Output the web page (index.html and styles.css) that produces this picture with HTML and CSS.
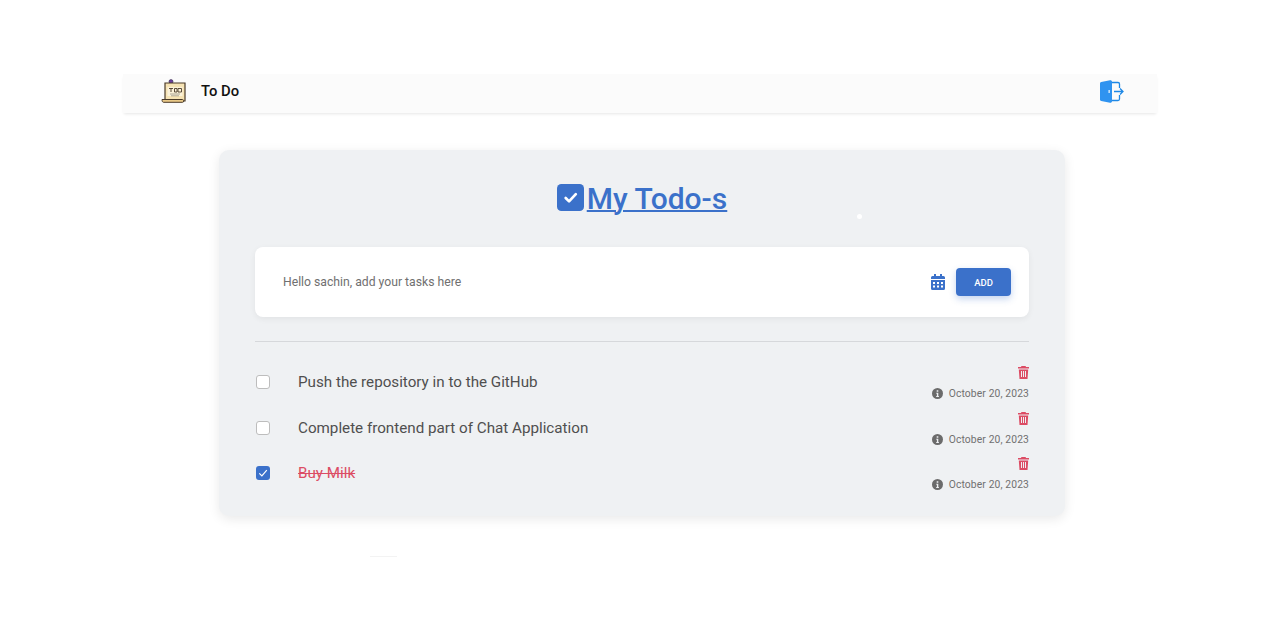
FILE: index.html
```html
<!DOCTYPE html>
<html lang="en">
<head>
<meta charset="utf-8">
<title>To Do</title>
<link rel="stylesheet" href="styles.css">
</head>
<body>
<div class="app">
  <nav class="navbar">
    <a class="brand">
      <svg class="brand-logo" viewBox="0 0 26 24" width="26" height="24">
        <circle cx="10" cy="2.600" r="2" fill="#6b3fa0" stroke="#2b2340" stroke-width=".6"/>
        <path d="M4 4h20v18H4z" fill="#f6e3b4" stroke="#4a3a28" stroke-width="1.200"/>
        <path d="M1 20.500h20.500c.8 0 1.200.7 1.200 1.500s-.4 1.300-1.200 1.300H2.500C1.500 23.300 1 22 1 20.500z" fill="#e9c987" stroke="#4a3a28" stroke-width="1"/>
        <rect x="6.500" y="8" width="15" height="9" fill="#fbf2d9"/>
        <path d="M8 9.500h4M10 9.500v3.500M13.500 9.500h2.500v3.500h-2.500zM17 9.500h3.500v3.500H17z" stroke="#4a3a28" stroke-width=".9" fill="none"/>
        <path d="M9 15h10M10 16.800h8" stroke="#9b9384" stroke-width=".8"/>
      </svg>
      <span class="brand-name">To Do</span>
    </a>
    <svg class="logout" viewBox="0 0 24 23" width="24" height="23">
      <path d="M11 2.500h7a1.500 1.500 0 0 1 1.500 1.500v4M19.500 15v4a1.500 1.500 0 0 1-1.500 1.500h-7" fill="none" stroke="#1e88e5" stroke-width="1.300"/>
      <path d="M0 3.500C0 2.700.5 2.200 1.200 2L10 .2c1-.2 2 .5 2 1.500v19.600c0 1-1 1.700-2 1.500l-8.800-1.800C.5 20.800 0 20.300 0 19.500z" fill="#2f93f0"/>
      <path d="M8.500 10h1.300v3H8.500z" fill="#e3f2fd"/>
      <path d="M14 11.500h9M20 8.500l3 3-3 3" fill="none" stroke="#1e88e5" stroke-width="1.300"/>
    </svg>
  </nav>

  <main class="card">
    <span class="speck"></span>
    <span class="smudge"></span>
    <h1 class="title">
      <svg class="title-icon" viewBox="0 0 28 28" width="27" height="27">
        <rect width="28" height="28" rx="4.500" fill="#3b71ca"/>
        <path d="M9 14.500 12.500 18 19.500 10.500" fill="none" stroke="#fff" stroke-width="2.800" stroke-linecap="round" stroke-linejoin="round"/>
      </svg><a class="title-link">My Todo-s</a>
    </h1>

    <form class="add-box">
      <span class="add-text">Hello sachin, add your tasks here</span>
      <svg class="calendar" viewBox="0 0 14 16" width="14" height="16">
        <path fill="#3b71ca" fill-rule="evenodd" d="M3 0h2v2h4V0h2v2h1.500A1.500 1.500 0 0 1 14 3.500V5H0V3.500A1.500 1.500 0 0 1 1.500 2H3zM0 6h14v8.500a1.500 1.500 0 0 1-1.500 1.500h-11A1.500 1.500 0 0 1 0 14.500zm2 2v2h2V8zm4 0v2h2V8zm4 0v2h2V8zm-8 3.500v2h2v-2zm4 0v2h2v-2zm4 0v2h2v-2z"/>
      </svg>
      <button class="add-btn" type="button">ADD</button>
    </form>

    <hr class="rule">

    <ul class="tasks">
      <li class="task">
        <span class="check"></span>
        <span class="task-text">Push the repository in to the GitHub</span>
        <div class="meta">
          <svg class="trash" viewBox="0 0 11 13" width="11" height="13"><path fill="#dc4c64" fill-rule="evenodd" d="M3.500 0h4l.6 1H11v1.500H0V1h2.900zM.8 3.500h9.400L9.500 13h-8zM3 5v6h1V5zm2 0v6h1V5zm2 0v6h1V5z"/></svg>
          <div class="date"><svg class="info" viewBox="0 0 11 11" width="11" height="11"><circle cx="5.500" cy="5.500" r="5.500" fill="#6b6b6b"/><path d="M4.700 2.200h1.600v1.500H4.700zM4.300 4.700h2v3.300h.6v1H4.200V8h.7V5.700h-.6z" fill="#eff1f3"/></svg><span>October 20, 2023</span></div>
        </div>
      </li>
      <li class="task">
        <span class="check"></span>
        <span class="task-text">Complete frontend part of Chat Application</span>
        <div class="meta">
          <svg class="trash" viewBox="0 0 11 13" width="11" height="13"><path fill="#dc4c64" fill-rule="evenodd" d="M3.500 0h4l.6 1H11v1.500H0V1h2.900zM.8 3.500h9.400L9.500 13h-8zM3 5v6h1V5zm2 0v6h1V5zm2 0v6h1V5z"/></svg>
          <div class="date"><svg class="info" viewBox="0 0 11 11" width="11" height="11"><circle cx="5.500" cy="5.500" r="5.500" fill="#6b6b6b"/><path d="M4.700 2.200h1.600v1.500H4.700zM4.300 4.700h2v3.300h.6v1H4.200V8h.7V5.700h-.6z" fill="#eff1f3"/></svg><span>October 20, 2023</span></div>
        </div>
      </li>
      <li class="task">
        <span class="check checked">
          <svg viewBox="0 0 14 14" width="14" height="14"><path d="M3.300 7.300 5.900 9.900 10.800 4.200" fill="none" stroke="#fff" stroke-width="1.200"/></svg>
        </span>
        <span class="task-text done">Buy Milk</span>
        <div class="meta">
          <svg class="trash" viewBox="0 0 11 13" width="11" height="13"><path fill="#dc4c64" fill-rule="evenodd" d="M3.500 0h4l.6 1H11v1.500H0V1h2.900zM.8 3.500h9.400L9.500 13h-8zM3 5v6h1V5zm2 0v6h1V5zm2 0v6h1V5z"/></svg>
          <div class="date"><svg class="info" viewBox="0 0 11 11" width="11" height="11"><circle cx="5.500" cy="5.500" r="5.500" fill="#6b6b6b"/><path d="M4.700 2.200h1.600v1.500H4.700zM4.300 4.700h2v3.300h.6v1H4.200V8h.7V5.700h-.6z" fill="#eff1f3"/></svg><span>October 20, 2023</span></div>
        </div>
      </li>
    </ul>
  </main>
</div>
</body>
</html>
```
FILE: styles.css
```css
* { box-sizing: border-box; }
html, body { margin: 0; height: 100%; }
body {
  background: #fff;
  font-family: Roboto, "Liberation Sans", sans-serif;
  color: #4f4f4f;
  overflow: hidden;
}
.app { width: 1034px; margin: 74px auto 0; }

.navbar {
  height: 39px;
  padding: 0 33px 5px 39px;
  background: #fbfbfb;
  box-shadow: 0 2px 3px -1px rgba(0, 0, 0, .1);
  display: flex;
  align-items: center;
  justify-content: space-between;
}
.brand { display: flex; align-items: center; gap: 14px; }
.brand-logo { display: block; margin-left: -1px; }
.brand-name { font-size: 14.800px; font-weight: 500; color: #111; }
.logout { display: block; }

.card {
  position: relative;
  width: 846px;
  height: 366px;
  margin: 37px 0 0 96px;
  padding: 29px 36px 0;
  background: #eff1f3;
  border-radius: 10px;
  box-shadow: 0 3px 12px rgba(0, 0, 0, .09);
}
.speck {
  position: absolute;
  left: 638px;
  top: 64px;
  width: 5px;
  height: 5px;
  border-radius: 50%;
  background: #fff;
}
.smudge {
  position: absolute;
  left: 151px;
  top: 406px;
  width: 27px;
  height: 1px;
  background: #f3f3f3;
}
.title {
  margin: 0;
  height: 40px;
  display: flex;
  justify-content: center;
  align-items: center;
  font-size: 30px;
  font-weight: 500;
  line-height: 40px;
}
.title-icon { display: block; margin-top: -3px; margin-right: 3px; }
.title-link { color: #3b71ca; text-decoration: underline; text-decoration-thickness: 2px; }

.add-box {
  height: 70px;
  margin: 28px 0 0;
  padding: 0 18px 0 28px;
  background: #fff;
  border-radius: 8px;
  box-shadow: 0 2px 6px rgba(0, 0, 0, .06);
  display: flex;
  align-items: center;
}
.add-text { flex: 1; font-size: 12.200px; color: #707070; }
.calendar { display: block; margin-right: 11px; }
.add-btn {
  width: 55px;
  height: 28px;
  padding: 0;
  border: 0;
  border-radius: 4px;
  background: #3b71ca;
  color: #fff;
  font: 500 9.500px Roboto, sans-serif;
  box-shadow: 0 3px 7px rgba(59, 113, 202, .3);
}

.rule { margin: 24px 0 0; border: 0; border-top: 1px solid #d6d8db; }

.tasks { list-style: none; margin: 17.250px 0 0; padding: 0; }
.task { height: 45.500px; display: flex; align-items: center; }
.check {
  width: 14px;
  height: 14px;
  flex: none;
  border: 1px solid #bdbdbd;
  border-radius: 3px;
  background: #fff;
  margin: 0 28.500px 0 .5px;
}
.check.checked { border: 0; background: #3b71ca; }
.check svg { display: block; }
.task-text { flex: 1; font-size: 15.200px; color: #4f4f4f; }
.task-text.done { color: #dc4c64; text-decoration: line-through; }
.meta { display: flex; flex-direction: column; align-items: flex-end; gap: 8px; padding-top: 2px; }
.trash { display: block; }
.date { display: flex; align-items: center; gap: 6px; font-size: 10.300px; line-height: 13px; color: #707070; letter-spacing: .13px; }
.info { display: block; }
```
